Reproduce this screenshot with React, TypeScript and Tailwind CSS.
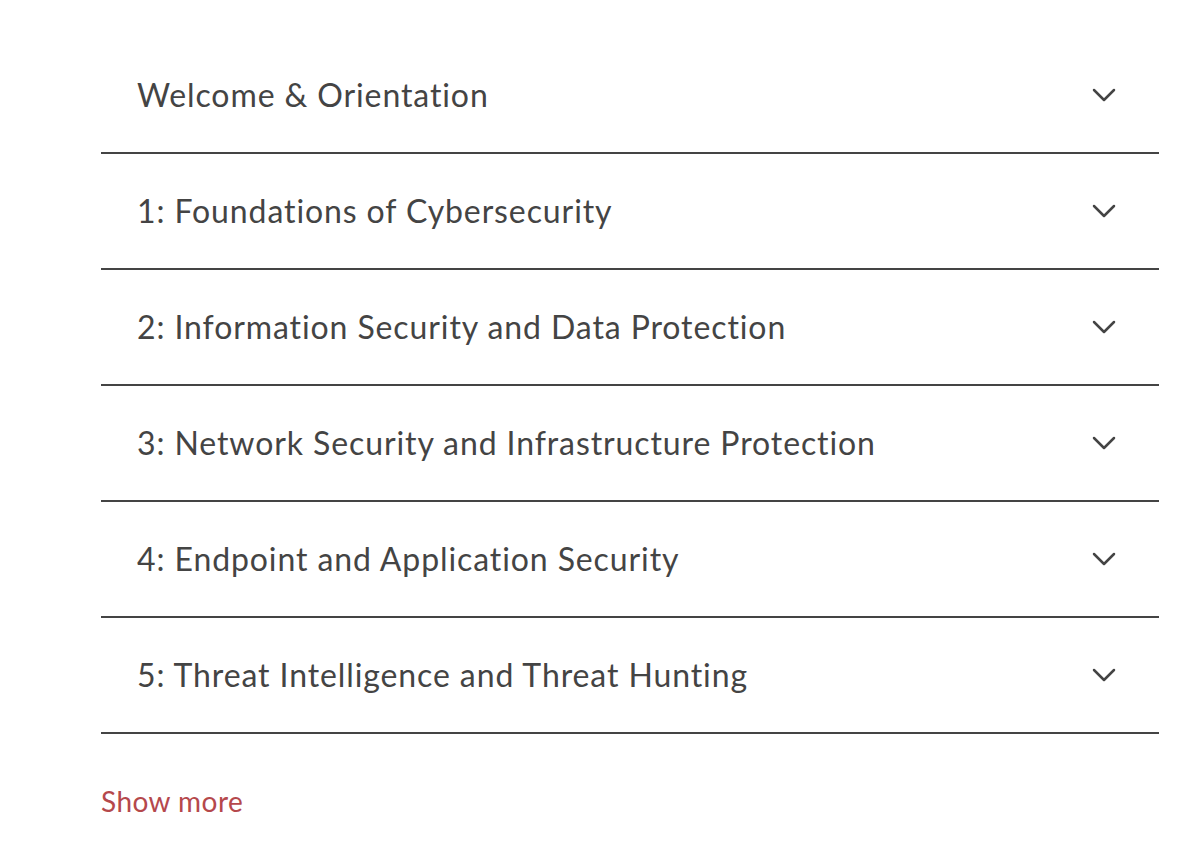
import React, { useState } from 'react';

const modules = [
  'Welcome & Orientation',
  '1: Foundations of Cybersecurity',
  '2: Information Security and Data Protection',
  '3: Network Security and Infrastructure Protection',
  '4: Endpoint and Application Security',
  '5: Threat Intelligence and Threat Hunting',
];

// simple down chevron, matches the thin stroked one in the design
const Chevron = () => (
  <svg width="24" height="14" viewBox="0 0 24 14" fill="none" className="shrink-0">
    <path d="M2 2l10 10 10-10" stroke="#444444" strokeWidth="2.5" strokeLinecap="round" strokeLinejoin="round" />
  </svg>
);

export default function App() {
  const [open, setOpen] = useState<number | null>(null);

  return (
    <div className="min-h-screen bg-white font-['Lato','Open_Sans',sans-serif] text-[#444444]">
      <div className="ml-[101px] mr-[41px] pt-[38px]">
        {modules.map((title, i) => (
          <div key={title} className="border-b-2 border-[#444444]">
            <button
              onClick={() => setOpen(open === i ? null : i)}
              className="w-full h-[114px] flex items-center justify-between pl-9 pr-[43px] text-left"
            >
              <span className="text-[32px] leading-none tracking-[0.9px]">{title}</span>
              <Chevron />
            </button>
          </div>
        ))}
        <button className="mt-[53px] text-[28px] leading-none text-[#b5484c] tracking-[0.45px]">Show more</button>
      </div>
    </div>
  );
}
